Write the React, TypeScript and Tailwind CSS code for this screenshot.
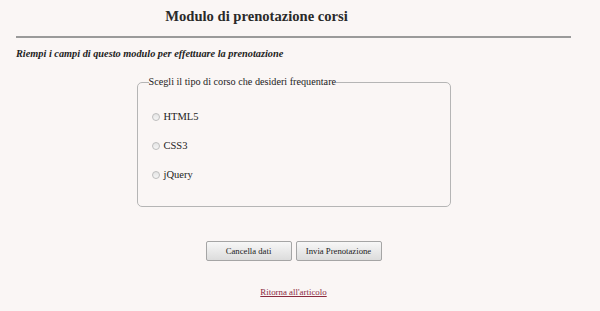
import React from "react";

export default function App() {
  const serif = { fontFamily: '"Liberation Serif", Georgia, serif' };
  return (
    <div className="w-[600px] h-[311px] bg-[#faf6f5] text-[#222] overflow-hidden" style={serif}>
      <div className="ml-[16px] w-[555px]">
        <h1 className="pt-[7px] pr-[74px] text-center text-[14.6px] font-bold leading-[19px] text-[#2a2a2a]">
          Modulo di prenotazione corsi
        </h1>
        <div className="mt-[10px] h-[2px] bg-[#9a9a9a]" />
        <p className="mt-[9px] text-[10.3px] italic font-bold leading-[14px] text-[#222]">
          Riempi i campi di questo modulo per effettuare la prenotazione
        </p>
        <div className="mt-[15px] flex justify-center">
          <fieldset className="w-[314px] h-[131px] border border-[#b5b5b5] rounded-[5px] px-[12px] pt-[23px]">
            <legend className="text-[10.2px] leading-[12px] px-0 -ml-[1px]">
              Scegli il tipo di corso che desideri frequentare
            </legend>
            <div className="flex flex-col gap-[17px]">
              {["HTML5", "CSS3", "jQuery"].map((c) => (
                <label key={c} className="flex items-center gap-[4px] text-[10.5px] leading-[12px]">
                  <span className="w-[8px] h-[8px] rounded-full border border-[#bdbdbd] bg-gradient-to-b from-[#e4e4e4] to-[#f5f5f5] ml-[2px]" />
                  <span>{c}</span>
                </label>
              ))}
            </div>
          </fieldset>
        </div>
        <div className="mt-[34px] flex justify-center gap-[4px]">
          <button className="w-[86px] h-[20px] whitespace-nowrap border border-[#a5a5a5] rounded-[2px] bg-gradient-to-b from-[#f7f7f7] to-[#dcdcdc] text-[8.7px] leading-[18px] text-[#1a1a1a]" style={serif}>
            Cancella dati
          </button>
          <button className="w-[86px] h-[20px] whitespace-nowrap border border-[#a5a5a5] rounded-[2px] bg-gradient-to-b from-[#f7f7f7] to-[#dcdcdc] text-[8.7px] leading-[18px] text-[#1a1a1a]" style={serif}>
            Invia Prenotazione
          </button>
        </div>
        <div className="mt-[25px] flex justify-center">
          <a href="#" className="text-[8.9px] leading-[12px] text-[#8b2a3f] underline">
            Ritorna all'articolo
          </a>
        </div>
      </div>
    </div>
  );
}
